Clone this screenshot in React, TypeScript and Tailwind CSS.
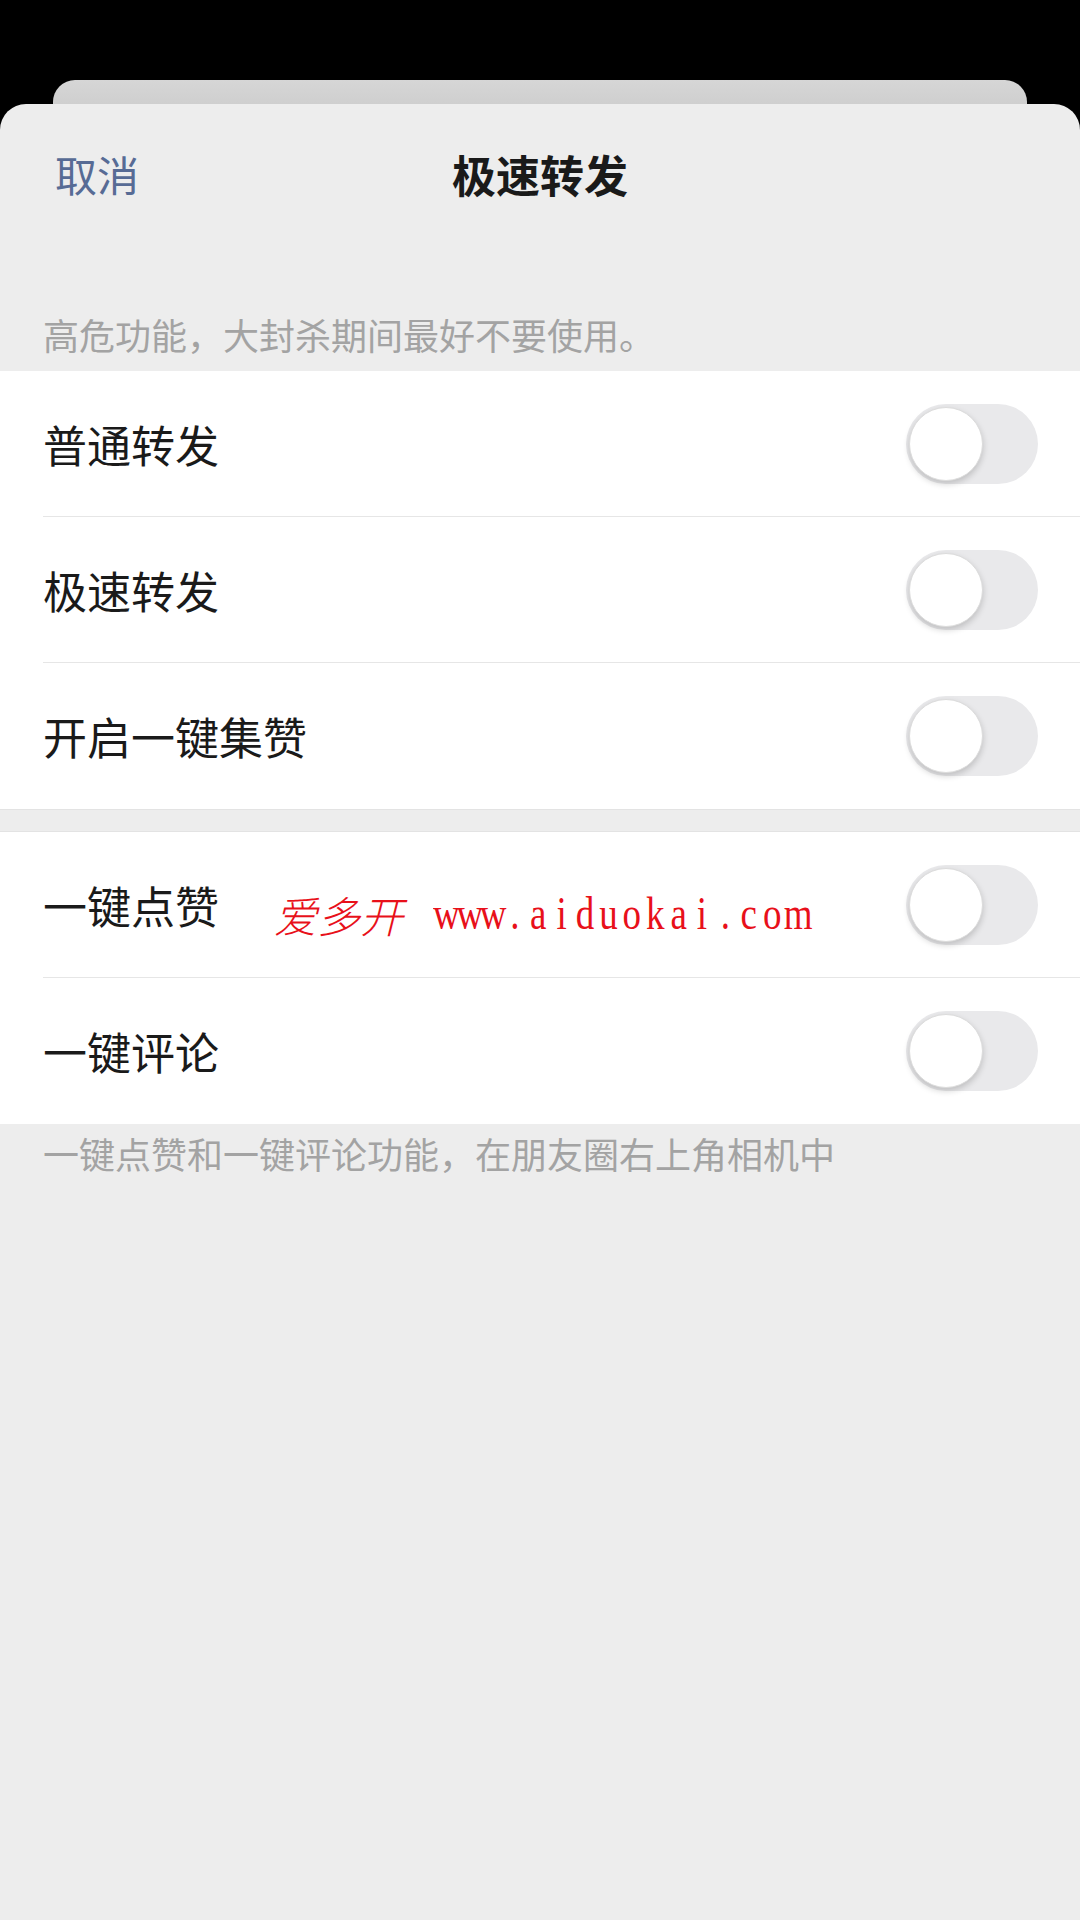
import React from 'react';

const FONT = { fontFamily: '"Noto Sans CJK SC", "Noto Sans", sans-serif' };

const Toggle: React.FC = () => (
  <div className="w-[132px] h-[80px] rounded-full bg-[#e9e9eb] p-[3px] flex items-center">
    <div className="w-[74px] h-[74px] rounded-full bg-white border border-[#dcdcdc] shadow-[0_3px_6px_rgba(0,0,0,0.18)]"></div>
  </div>
);

const Row: React.FC<{ label: string; last?: boolean }> = ({ label, last }) => (
  <div className="pl-[43px] bg-white">
    <div className={`h-[146px] flex items-center justify-between pr-[42px] ${last ? '' : 'border-b border-[#e6e6e6]'}`}>
      <span className="text-[44px] text-[#1a1a1a] leading-none">{label}</span>
      <Toggle />
    </div>
  </div>
);

// watermark url drawn in even cells, like a monospaced serif
const url = 'www.aiduokai.com';

export default function App() {
  return (
    <div className="w-[1080px] h-[1920px] bg-black flex flex-col overflow-hidden relative" style={FONT}>
      <div className="h-[80px] shrink-0"></div>
      <div className="mx-[53px] h-[24px] shrink-0 rounded-t-[22px] bg-gradient-to-b from-[#d6d6d6] to-[#cfcfcf]"></div>
      <div className="flex-1 bg-[#ededed] rounded-t-[26px] flex flex-col">
        <div className="h-[148px] relative flex items-center justify-center pb-[8px]">
          <span className="absolute left-[55px] top-[45px] text-[42px] leading-[50px] text-[#576b95]">取消</span>
          <span className="text-[44px] font-bold text-[#1a1a1a]">极速转发</span>
        </div>
        <div className="h-[119px] flex items-end pl-[43px] pb-[12px]">
          <span className="text-[36px] leading-[50px] text-[#a3a3a3]">高危功能，大封杀期间最好不要使用。</span>
        </div>
        <div className="border-b border-[#e3e3e3]">
          <Row label="普通转发" />
          <Row label="极速转发" />
          <Row label="开启一键集赞" last />
        </div>
        <div className="h-[21px] bg-[#ededed]"></div>
        <div className="border-t border-[#e3e3e3]">
          <Row label="一键点赞" />
          <Row label="一键评论" last />
        </div>
        <div className="pl-[43px] pt-[4px]">
          <span className="text-[36px] leading-[50px] text-[#a3a3a3]">一键点赞和一键评论功能，在朋友圈右上角相机中</span>
        </div>
      </div>
      <div className="absolute left-[274px] top-[884px] flex items-baseline text-[#e8101a]">
        <span className="text-[43px] leading-[60px] italic mr-[30px]" style={{ fontFamily: '"Noto Sans CJK SC", serif', fontWeight: 300 }}>爱多开</span>
        <span className="flex items-baseline origin-bottom scale-y-[1.25]" style={{ fontFamily: '"Liberation Serif", serif' }}>
          {url.split('').map((c, i) => (
            <span key={i} className="inline-block w-[23.4px] text-center text-[37px] leading-[60px]">{c}</span>
          ))}
        </span>
      </div>
    </div>
  );
}
